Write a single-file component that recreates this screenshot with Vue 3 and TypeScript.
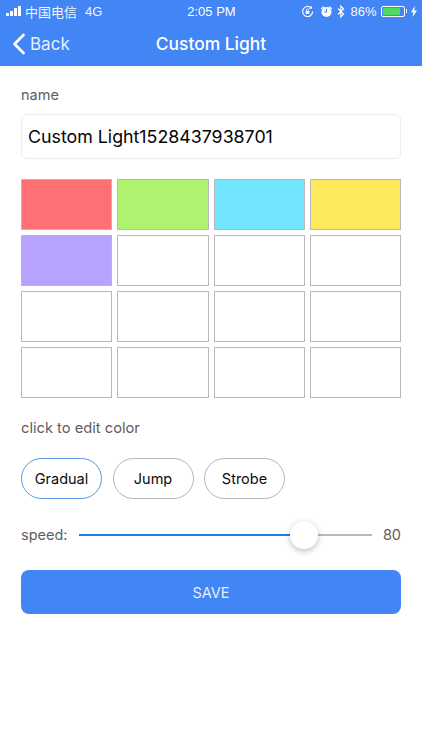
<script setup lang="ts">
const cells: string[] = [
  '#ff7074', '#aef471', '#72e5ff', '#ffe95c',
  '#b8a2ff', '#fff', '#fff', '#fff',
  '#fff', '#fff', '#fff', '#fff',
  '#fff', '#fff', '#fff', '#fff',
]
const bars = [3, 5, 8, 10]
</script>

<template>
  <div class="page">
    <header class="head">
      <div class="status">
        <div class="st-left">
          <span class="bars"><i v-for="h in bars" :key="h" :style="{ height: h + 'px' }"></i></span>
          <span class="carrier">中国电信</span>
          <span class="net">4G</span>
        </div>
        <span class="time">2:05 PM</span>
        <div class="st-right">
          <svg width="13" height="13" viewBox="0 0 13 13" fill="none" stroke="#fff" stroke-width="1.2">
            <path d="M11.6 6.5a5 5 0 1 1-1.5-3.6" />
            <path d="M10.6 1.2v2.2H8.4" stroke-width="1" />
            <rect x="4.6" y="6" width="3.8" height="3" fill="#fff" stroke="none" />
            <path d="M5.4 6V5a1.1 1.1 0 0 1 2.2 0v1" stroke-width="0.8" />
          </svg>
          <svg class="alarm" width="13" height="13" viewBox="0 0 13 13" fill="#fff">
            <circle cx="6.5" cy="7" r="5" />
            <path d="M0.8 3.6 3.2 1.2 4.2 2 1.6 4.6Z M12.2 3.6 9.8 1.2 8.8 2 11.4 4.6Z" />
            <path d="M6.5 3.8V7H4.2" fill="none" stroke="#4285f4" stroke-width="1.1" />
          </svg>
          <svg class="bt" width="8" height="13" viewBox="0 0 8 13" fill="none" stroke="#fff" stroke-width="1.1">
            <path d="M1 3.5 6.6 9 3.8 12V1L6.6 4 1 9.5" />
          </svg>
          <span class="pct">86%</span>
          <span class="battery"><b></b></span>
          <span class="nub"></span>
          <svg class="bolt" width="6" height="11" viewBox="0 0 6 11" fill="#fff">
            <path d="M3.8 0 0 6.2h2.3L1.6 11 6 4.4H3.4Z" />
          </svg>
        </div>
      </div>
      <div class="nav">
        <div class="back">
          <svg width="14" height="22" viewBox="0 0 14 22" fill="none" stroke="#fff" stroke-width="2.8" stroke-linecap="round" stroke-linejoin="round">
            <path d="M11.5 2 2.5 11l9 9" />
          </svg>
          <span>Back</span>
        </div>
        <h1>Custom Light</h1>
      </div>
    </header>

    <main class="content">
      <div class="label name-label">name</div>
      <div class="input">Custom Light1528437938701</div>

      <div class="grid">
        <div v-for="(c, i) in cells" :key="i" class="cell" :style="{ background: c }"></div>
      </div>

      <div class="label edit-label">click to edit color</div>

      <div class="modes">
        <button class="mode active">Gradual</button>
        <button class="mode">Jump</button>
        <button class="mode">Strobe</button>
      </div>

      <div class="speed">
        <span class="label">speed:</span>
        <div class="track">
          <div class="fill"></div>
          <div class="line"></div>
          <div class="thumb"></div>
        </div>
        <span class="label value">80</span>
      </div>

      <button class="save">SAVE</button>
    </main>
  </div>
</template>

<style>
html, body { margin: 0; background: #fff; }
</style>

<style scoped>
.page {
  width: 422px;
  height: 750px;
  background: #fff;
  overflow: hidden;
  font-family: Inter, "Liberation Sans", "Noto Sans CJK SC", sans-serif;
}
.head { background: #4285f4; height: 66px; color: #fff; }
.status {
  height: 22px;
  padding: 0 5px 0 6px;
  display: grid;
  grid-template-columns: 1fr auto 1fr;
  align-items: center;
  font-size: 12px;
  font-family: "Liberation Sans", "Noto Sans CJK SC", sans-serif;
}
.st-left { display: flex; align-items: center; }
.bars { display: flex; align-items: flex-end; gap: 1px; height: 10px; margin-right: 4px; }
.bars i { width: 3px; background: #fff; border-radius: .5px; display: block; }
.carrier { font-size: 13px; opacity: .92; }
.net { margin-left: 8px; font-size: 13px; opacity: .92; }
.time { font-size: 13px; font-weight: 400; }
.st-right { display: flex; align-items: center; justify-content: flex-end; }
.alarm { margin-left: 6px; }
.bt { margin-left: 4px; }
.pct { margin-left: 5px; font-size: 13px; opacity: .95; }
.battery {
  margin-left: 4px;
  width: 24px;
  height: 11px;
  box-sizing: border-box;
  border: 1px solid #fff;
  border-radius: 2px;
  padding: 1px;
  display: block;
}
.battery b { display: block; width: 86%; height: 100%; background: #4cd964; border-radius: 1px; }
.nub { width: 1.5px; height: 4px; background: #fff; margin-left: 1px; }
.bolt { margin-left: 4px; }
.nav { position: relative; height: 44px; display: flex; align-items: center; justify-content: center; }
.nav h1 { position: relative; top: -1px; }
.back {
  position: absolute;
  left: 12px;
  top: 10px;
  display: flex;
  align-items: center;
  gap: 4px;
  font-size: 17px;
  line-height: 24px;
  color: #e8f0fe;
}
h1 { margin: 0; font-size: 17.4px; font-weight: 500; color: #fff; }

.content { padding: 0 21px; }
.label { color: #5e5e5e; font-size: 14.5px; line-height: 18px; }
.name-label { margin-top: 20px; }
.input {
  margin-top: 10px;
  height: 43px;
  box-sizing: content-box;
  border: 1px solid #ececec;
  border-radius: 6px;
  padding-left: 6px;
  line-height: 43px;
  font-size: 17.8px;
  color: #050505;
}
.grid {
  margin-top: 20px;
  display: grid;
  grid-template-columns: repeat(4, 1fr);
  gap: 5px;
}
.cell { height: 49px; border: 1px solid #b9b9b9; }
.edit-label { margin-top: 21px; font-size: 14.7px; }
.modes { display: flex; gap: 10.5px; margin-top: 21px; }
.mode {
  width: 81px;
  height: 40.5px;
  border: 1px solid #b5b5b5;
  border-radius: 21px;
  background: #fff;
  font: inherit;
  font-size: 14.5px;
  color: #0c0c0c;
  padding: 0;
}
.mode.active { border-color: #5a94e6; }
.speed { display: flex; align-items: center; margin-top: 24px; height: 24px; }
.track { position: relative; flex: 1; height: 24px; margin: 0 10px 0 11px; }
.fill, .line { position: absolute; top: 11px; height: 2px; }
.fill { left: 0; width: 74%; background: #1a7fe6; }
.line { left: 74%; right: 0; background: #b9b9b9; }
.thumb {
  position: absolute;
  left: 211.5px;
  top: -2px;
  width: 28px;
  height: 28px;
  border-radius: 50%;
  background: #fff;
  box-shadow: 0 2px 6px rgba(0, 0, 0, .25);
}
.value { width: 19px; text-align: right; }
.save {
  display: block;
  margin-top: 23.5px;
  width: 100%;
  height: 44px;
  border: 0;
  border-radius: 8px;
  background: #4285f4;
  color: #e6effe;
  font: inherit;
  font-size: 14.5px;
}
</style>
